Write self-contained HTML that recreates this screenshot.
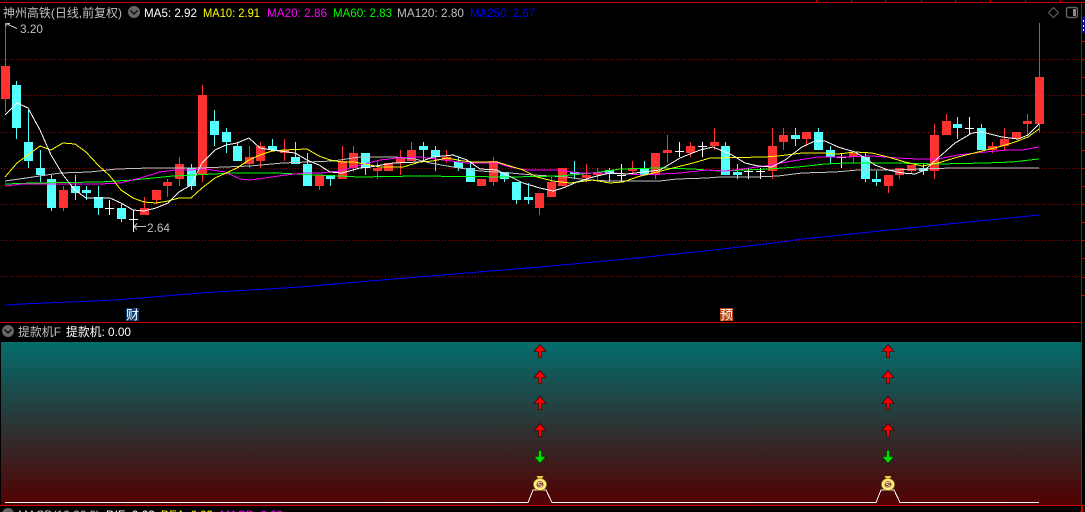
<!DOCTYPE html>
<html>
<head>
<meta charset="utf-8">
<style>
html,body{margin:0;padding:0;background:#000;width:1085px;height:512px;overflow:hidden}
svg{display:block;position:absolute;left:0;top:0}
text{font-family:"Liberation Sans","WenQuanYi Zen Hei","Noto Sans CJK SC",sans-serif;font-size:12px}
</style>
</head>
<body>
<svg width="1085" height="512" viewBox="0 0 1085 512" xmlns="http://www.w3.org/2000/svg">
<defs>
<linearGradient id="g" x1="0" y1="0" x2="0" y2="1">
<stop offset="0" stop-color="#046c6c"/>
<stop offset="1" stop-color="#520000"/>
</linearGradient>
</defs>
<rect width="1085" height="512" fill="#000"/>

<!-- frame -->
<g shape-rendering="crispEdges" stroke="#c80000" fill="none">
<path d="M0 2.5H1085M0 322.5H1081M0 505.5H1085M1081.5 2V512"/>
<path d="M816.5 0V2M851.5 0V2M885.5 0V2M921.5 0V2M955.5 0V2M990.5 0V2M1025.5 0V2M1060.5 0V2"/>
<path d="M1082 41.5h3M1082 59.5h3M1082 77.5h3M1082 95.5h3M1082 114.5h3M1082 132.5h3M1082 150.5h3M1082 168.5h3M1082 186.5h3M1082 204.5h3M1082 222.5h3M1082 240.5h3M1082 258.5h3M1082 277.5h3M1082 295.5h3"/>
<path d="M1081 510.5V512M1082.5 505V512"/>
</g>
<rect x="1082" y="17" width="3" height="16" fill="#0a0a80"/>
<path d="M1083.5 20v2M1083.5 25v2M1083.5 29v2" stroke="#fff" shape-rendering="crispEdges"/>

<!-- grid -->
<g shape-rendering="crispEdges" stroke="#a00000" stroke-dasharray="1 2" fill="none">
<path d="M1 59.5H1081M1 95.5H1081M1 132.5H1081M1 168.5H1081M1 204.5H1081M1 240.5H1081M1 276.5H1081"/>
</g>

<!-- candles -->
<g shape-rendering="crispEdges">
<path stroke="#ff3232" fill="none" d="M5.5 23V112M63.5 186V211M144.5 197V215M156.5 190V204M167.5 179V197M179.5 157V186M202.5 85V182M249.5 146V168M260.5 142V168M284.5 139V161M319.5 175V190M342.5 146V179M353.5 146V172M377.5 161V179M388.5 163V171M400.5 150V175M411.5 142V161M446.5 150V163M481.5 179V186M493.5 157V186M539.5 193V215M551.5 177V197M562.5 168V186M586.5 164V182M597.5 168V180M632.5 161V175M655.5 153V179M667.5 135V163M690.5 142V157M714.5 128V150M772.5 128V179M783.5 128V150M806.5 132V146M853.5 153V163M888.5 175V193M899.5 168V179M911.5 165V174M934.5 124V179M946.5 114V135M992.5 142V153M1004.5 128V150M1016.5 132V140M1027.5 114V135M1039.5 23V132"/>
<path fill="#ff3232" d="M1 66h9V99h-9zM59 190h9V208h-9zM140 208h9V215h-9zM152 190h9V200h-9zM163 182h9V186h-9zM175 164h9V179h-9zM198 95h9V175h-9zM245 157h9V164h-9zM256 146h9V161h-9zM280 150h9V153h-9zM315 175h9V186h-9zM338 161h9V179h-9zM349 153h9V168h-9zM373 168h9V171h-9zM384 163h9V171h-9zM396 158h9V163h-9zM407 150h9V161h-9zM442 157h9V160h-9zM477 179h9V186h-9zM489 161h9V182h-9zM535 193h9V208h-9zM547 182h9V197h-9zM558 168h9V186h-9zM582 175h9V178h-9zM593 172h9V175h-9zM628 168h9V171h-9zM651 153h9V175h-9zM663 150h9V153h-9zM686 146h9V153h-9zM710 142h9V146h-9zM768 146h9V171h-9zM779 135h9V142h-9zM802 132h9V139h-9zM849 153h9V157h-9zM884 175h9V186h-9zM895 168h9V175h-9zM907 165h9V171h-9zM930 135h9V171h-9zM942 121h9V135h-9zM988 146h9V150h-9zM1000 139h9V146h-9zM1012 132h9V139h-9zM1023 121h9V124h-9zM1035 77h9V124h-9z"/>
<path stroke="#54ffff" fill="none" d="M16.500 81V139M28.500 110V168M40.500 150V182M51.500 175V211M75.500 175V200M86.500 186V200M98.500 186V215M121.500 204V222M191.500 164V190M214.500 110V146M226.500 128V153M237.500 142V161M272.500 139V150M295.500 142V164M307.500 153V186M330.500 175V186M365.500 153V175M423.500 142V162M435.500 146V171M458.500 157V171M470.500 163V182M504.500 172V182M516.500 182V204M528.500 183V204M574.500 161V179M609.500 168V182M644.500 161V175M725.500 142V175M737.500 164V179M795.500 128V146M818.500 128V150M830.500 146V164M865.500 153V182M876.500 171V186M923.500 164V175M957.500 117V139M981.500 124V150"/>
<path fill="#54ffff" d="M12 85h9V128h-9zM24 142h9V161h-9zM36 168h9V175h-9zM47 179h9V208h-9zM71 186h9V193h-9zM82 190h9V193h-9zM94 197h9V208h-9zM117 208h9V219h-9zM187 168h9V186h-9zM210 121h9V135h-9zM222 132h9V142h-9zM233 146h9V161h-9zM268 146h9V150h-9zM291 157h9V164h-9zM303 164h9V186h-9zM326 175h9V179h-9zM361 153h9V168h-9zM419 146h9V150h-9zM431 150h9V157h-9zM454 162h9V168h-9zM466 168h9V182h-9zM500 172h9V179h-9zM512 182h9V200h-9zM524 197h9V200h-9zM570 172h9V174h-9zM605 170h9V174h-9zM640 168h9V175h-9zM721 146h9V175h-9zM733 172h9V175h-9zM791 135h9V139h-9zM814 132h9V150h-9zM826 150h9V157h-9zM861 157h9V179h-9zM872 179h9V182h-9zM919 168h9V171h-9zM953 124h9V128h-9zM977 128h9V150h-9z"/>
<path stroke="#fff" fill="none" d="M109.500 200V215M105 208.500h9M133.500 210V232M129 219.500h9M621.500 164V182M617 175.500h9M679.500 142V157M675 151.500h9M702.500 142V157M698 146.500h9M748.500 168V179M744 171.500h9M760.500 168V179M756 171.500h9M841.500 153V168M837 157.500h9M969.500 117V135M965 128.500h9"/>
</g>

<!-- moving averages -->
<g fill="none" stroke-width="1" shape-rendering="crispEdges">
<polyline stroke="#0000ff" points="5,305 22,304 47,303 70,302 92,301 115,300 140,298 200,293 300,287 370,281 430,276 540,267 627,259 714,250 790,241 798,239.500 918,227 1039,215"/>
<polyline stroke="#c0c0c0" points="5,181 33,177 60,173 90,172 117,169 150,168 200,168 250,166 283,163 333,161 360,157 395,157 415,159 430,163 453,167 480,171 510,173 533,175 567,177 587,180 610,181 660,181 677,179 707,178 720,177 755,177 778,176 802,173 835,172 858,170 892,170 952,168 965,168 1039,168"/>
<polyline stroke="#00ff00" points="5,184 33,183 100,182 133,180 173,176 233,173 277,173 317,175 360,177 417,176 510,177 560,176 593,173 620,169 660,168 693,169 720,171 768,169 798,167 825,164 848,163 895,163 938,164 985,163 1012,162 1039,159"/>
<polyline stroke="#ff00ff" points="5,186 22,184 60,184 100,184 120,183 140,178 160,172 175,170 190,170 205,169 225,172 240,179 250,180 265,178 285,175 305,173 320,173 340,171 360,165 380,160 397,158 420,157 443,160 467,163 497,163 510,167 527,170 560,170 577,173 613,173 643,175 680,173 707,170 725,171 742,169 765,166 792,161 818,157 845,157 872,156 898,158 918,159 938,159 958,155 985,152 1008,150 1022,150 1039,147"/>
<polyline stroke="#ffff00" points="5,177 17,163 28,155 40,146 51,150 63,143 75,144 86,152 98,165 110,176 121,190 133,198 144,202 156,203 168,201 179,198 191,198 202,188 215,178 226,173 237,168 249,160 260,155 272,151 284,150 307,149 319,156 330,160 342,162 354,162 370,165 380,167 403,167 420,162 433,161 447,158 463,161 473,162 497,162 510,166 523,170 537,177 553,181 570,183 593,180 610,183 623,182 637,177 653,173 673,168 693,163 710,158 765,157 778,156 802,153 822,153 838,154 855,152 872,153 888,157 905,162 922,166 938,163 958,157 978,152 1002,146 1015,142 1028,137 1039,129"/>
<polyline stroke="#ffffff" points="5,115 17,103 28,108 40,130 51,155 63,175 75,190 86,198 110,198 121,203 133,210 144,211 156,208 168,203 179,192 191,185 202,163 215,150 226,145 237,143 249,138 260,148 272,150 295,153 307,160 319,165 330,172 342,173 360,168 370,167 393,163 420,162 433,157 453,155 467,160 480,169 497,170 513,178 523,183 540,188 553,191 563,188 577,182 593,177 610,173 627,174 643,172 660,170 680,158 700,150 713,147 725,152 732,155 745,163 758,166 772,167 785,160 802,147 815,141 825,141 838,147 855,152 865,158 875,165 888,170 902,173 915,174 925,170 938,158 955,143 972,133 982,132 1002,137 1018,139 1028,135 1035,128 1039,124"/>
</g>

<!-- price annotations -->
<g fill="none" stroke="#c0c0c0" shape-rendering="crispEdges">
<path d="M6 23.500L17 28.500M6 23.500h4M6 23.500v3"/>
<path d="M134 226.500H146M134 226.500l3-3M134 226.500l3 3"/>
</g>
<text x="20" y="33" fill="#c0c0c0" textLength="23" lengthAdjust="spacingAndGlyphs">3.20</text>
<text x="147" y="232" fill="#c0c0c0" textLength="23" lengthAdjust="spacingAndGlyphs">2.64</text>

<!-- header -->
<text x="3" y="17" fill="#c0c0c0" textLength="119" lengthAdjust="spacingAndGlyphs">神州高铁(日线,前复权)</text>
<circle cx="134" cy="12" r="6" fill="#666"/>
<path d="M130.500 10.500l3.500 3.500 3.500-3.500" stroke="#111" stroke-width="1.500" fill="none"/>
<text x="144" y="17" fill="#fff" textLength="53" lengthAdjust="spacingAndGlyphs">MA5: 2.92</text>
<text x="203" y="17" fill="#ffff00" textLength="57" lengthAdjust="spacingAndGlyphs">MA10: 2.91</text>
<text x="267" y="17" fill="#ff00ff" textLength="60" lengthAdjust="spacingAndGlyphs">MA20: 2.86</text>
<text x="333" y="17" fill="#00ff00" textLength="59" lengthAdjust="spacingAndGlyphs">MA60: 2.83</text>
<text x="397" y="17" fill="#c0c0c0" textLength="67" lengthAdjust="spacingAndGlyphs">MA120: 2.80</text>
<text x="470" y="17" fill="#0000ff" textLength="65" lengthAdjust="spacingAndGlyphs">MA250: 2.67</text>

<!-- top right icons -->
<path d="M1053.500 7.500l5 5-5 5-5-5z" fill="none" stroke="#666"/>
<rect x="1066.500" y="7.500" width="11" height="10" rx="2" fill="none" stroke="#666" stroke-width="1.400"/>
<rect x="1073" y="9" width="3" height="7" fill="#888"/>

<!-- markers -->
<rect x="126" y="308" width="13" height="13" fill="#0a3a6a"/>
<text x="126" y="319.500" fill="#fff" style="font-size:13px">财</text>
<rect x="720" y="308" width="13" height="13" fill="#b84010"/>
<text x="720" y="319.500" fill="#fff" style="font-size:13px">预</text>

<!-- sub panel label -->
<circle cx="8" cy="331" r="6" fill="#666"/>
<path d="M4.500 329.500l3.500 3.500 3.500-3.500" stroke="#111" stroke-width="1.500" fill="none"/>
<text x="18" y="336" fill="#c0c0c0" textLength="43" lengthAdjust="spacingAndGlyphs">提款机F</text>
<text x="66" y="336" fill="#fff" textLength="65" lengthAdjust="spacingAndGlyphs">提款机: 0.00</text>

<!-- gradient panel -->
<rect x="1" y="342" width="1080" height="163" fill="url(#g)" shape-rendering="crispEdges"/>

<!-- arrows -->
<g stroke="#200000" stroke-width=".6" fill="#ff0000">
<path d="M540 344.500l6 7h-4.500v6h-3v-6h-4.500z"/>
<path d="M540 370.500l6 7h-4.500v6h-3v-6h-4.500z"/>
<path d="M540 396.500l6 7h-4.500v6h-3v-6h-4.500z"/>
<path d="M540 423.500l6 7h-4.500v6h-3v-6h-4.500z"/>
<path d="M888 344.500l6 7h-4.500v6h-3v-6h-4.500z"/>
<path d="M888 370.500l6 7h-4.500v6h-3v-6h-4.500z"/>
<path d="M888 396.500l6 7h-4.500v6h-3v-6h-4.500z"/>
<path d="M888 423.500l6 7h-4.500v6h-3v-6h-4.500z"/>
</g>
<g stroke="#002000" stroke-width=".6" fill="#00e000">
<path d="M540 463.500l6-7h-4.500v-6h-3v6h-4.500z"/>
<path d="M888 463.500l6-7h-4.500v-6h-3v6h-4.500z"/>
</g>

<!-- signal line -->
<polyline fill="none" stroke="#fff" shape-rendering="crispEdges" points="5,502.500 528,502.500 533,490 546,490 552,502.500 876,502.500 881,490 894,490 900,502.500 1039,502.500"/>

<!-- money bags -->
<g>
<path d="M536.500 476h7l-2 3h-3z" fill="#f0d040"/>
<ellipse cx="540" cy="484.500" rx="6.500" ry="6" fill="#fff080" stroke="#a08020" stroke-width=".8"/>
<circle cx="540" cy="484.500" r="3.500" fill="#8a4a30"/>
<path d="M542 483c-1-1-4-1-4 .5s4 1 4 2.500-3 1.500-4 .5" stroke="#fff0c8" fill="none" stroke-width=".8"/>
</g>
<g>
<path d="M884.500 476h7l-2 3h-3z" fill="#f0d040"/>
<ellipse cx="888" cy="484.500" rx="6.500" ry="6" fill="#fff080" stroke="#a08020" stroke-width=".8"/>
<circle cx="888" cy="484.500" r="3.500" fill="#8a4a30"/>
<path d="M890 483c-1-1-4-1-4 .5s4 1 4 2.500-3 1.500-4 .5" stroke="#fff0c8" fill="none" stroke-width=".8"/>
</g>

<!-- clipped bottom label -->
<circle cx="8" cy="514" r="6" fill="#666"/>
<text x="18" y="519" fill="#c0c0c0" textLength="82" lengthAdjust="spacingAndGlyphs">MACD(12,26,9)</text>
<text x="106" y="519" fill="#fff" textLength="49" lengthAdjust="spacingAndGlyphs">DIF: 0.03</text>
<text x="161" y="519" fill="#ffff00" textLength="52" lengthAdjust="spacingAndGlyphs">DEA: 0.03</text>
<text x="220" y="519" fill="#ff00ff" textLength="63" lengthAdjust="spacingAndGlyphs">MACD: 0.03</text>
</svg>
</body>
</html>
